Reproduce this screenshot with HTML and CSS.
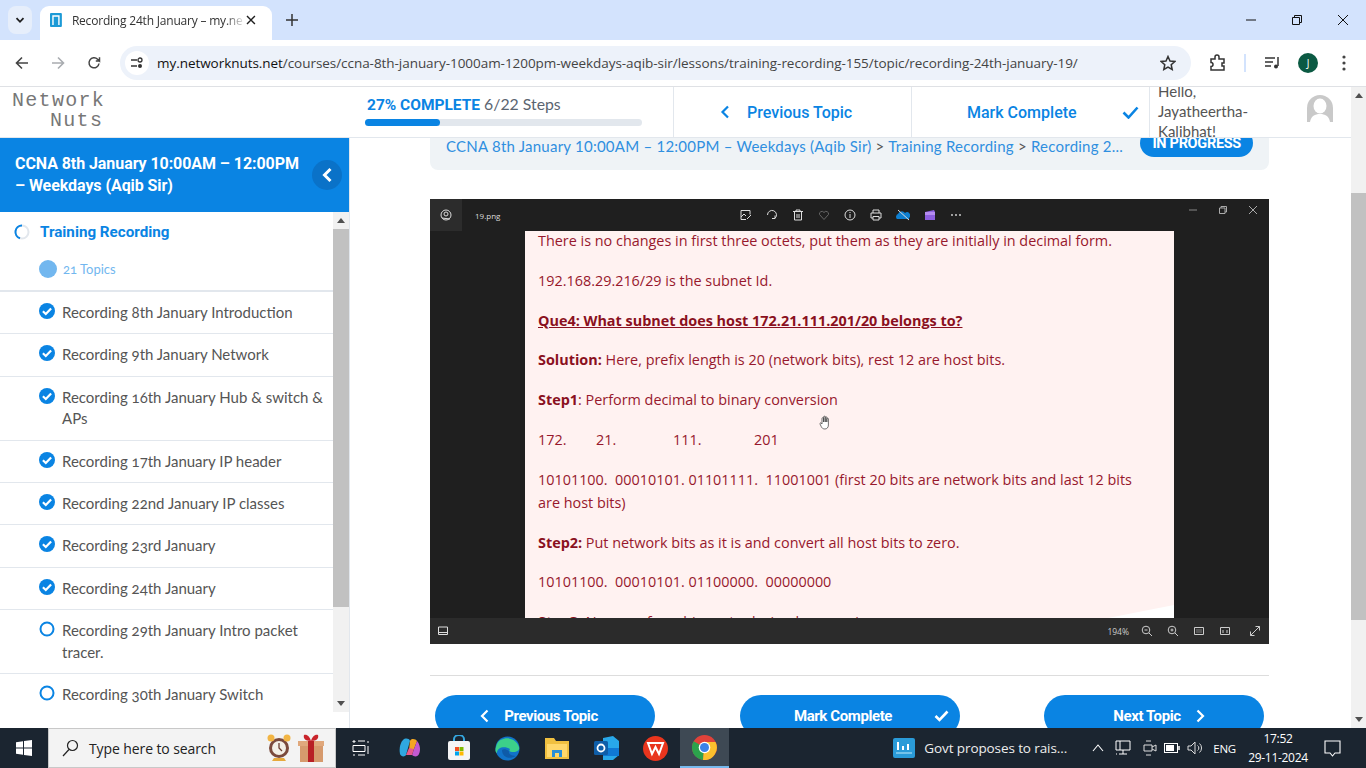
FILE: index.html
```html
<!DOCTYPE html>
<html lang="en">
<head>
    <meta charset="UTF-8">
    <meta name="viewport" content="width=device-width, initial-scale=1.0">
    <title>Recording 24th January – my.networknuts.net</title>
    <link rel="stylesheet" href="styles.css">
</head>
<body>
    <svg class="defs" width="0" height="0">
        <symbol id="done" viewBox="0 0 16 16">
            <circle cx="8" cy="8" r="8" fill="#0a84e3"/>
            <path d="M3.9 8.2l2.9 2.8 5.3-5.6" fill="none" stroke="#fff" stroke-width="2.2"/>
        </symbol>
        <symbol id="todo" viewBox="0 0 16 16">
            <circle cx="8" cy="8" r="6.5" fill="none" stroke="#0a84e3" stroke-width="2"/>
        </symbol>
    </svg>

    <!-- browser chrome -->
    <div class="tabstrip">
        <div class="tab-menu">
            <svg width="12" height="12" viewBox="0 0 12 12"><path d="M2.5 4.2L6 7.8l3.5-3.6" fill="none" stroke="#1f1f1f" stroke-width="1.8"/></svg>
        </div>
        <div class="tab">
            <svg class="favicon" width="12" height="14" viewBox="0 0 12 14"><rect width="12" height="14" rx="1" fill="#1c9ad6"/><path d="M3 12V3h6v9" fill="none" stroke="#fff" stroke-width="1.4"/></svg>
            <span class="tab-title">Recording 24th January – my.ne</span>
            <svg class="tab-close" width="10" height="10" viewBox="0 0 10 10"><path d="M1 1l8 8M9 1l-8 8" stroke="#1f1f1f" stroke-width="1.4"/></svg>
        </div>
        <svg class="new-tab" width="12" height="12" viewBox="0 0 12 12"><path d="M6 0v12M0 6h12" stroke="#333" stroke-width="1.5"/></svg>
        <div class="window-btns">
            <svg width="12" height="12" viewBox="0 0 12 12"><path d="M1 6h10" stroke="#111" stroke-width="1"/></svg>
            <svg width="12" height="12" viewBox="0 0 12 12"><path d="M1.5 3.5h7v7h-7zM3.5 3.5v-2h7v7h-2" fill="none" stroke="#111" stroke-width="1"/></svg>
            <svg width="12" height="12" viewBox="0 0 12 12"><path d="M1 1l10 10M11 1L1 11" stroke="#111" stroke-width="1"/></svg>
        </div>
    </div>

    <div class="toolbar">
        <svg class="nav-btn" width="14" height="14" viewBox="0 0 14 14"><path d="M13 7H1.5M7 1.5L1.5 7 7 12.5" fill="none" stroke="#444" stroke-width="1.6"/></svg>
        <svg class="nav-btn" width="14" height="14" viewBox="0 0 14 14"><path d="M1 7h11.5M7 1.5L12.5 7 7 12.5" fill="none" stroke="#a9acb0" stroke-width="1.6"/></svg>
        <svg class="nav-btn" width="14" height="14" viewBox="0 0 14 14"><path d="M12 7.5A5 5 0 1 1 10.6 3.3L12.5 5V1.2M12.5 5H8.8" fill="none" stroke="#444" stroke-width="1.5"/></svg>
        <div class="omnibox">
            <span class="site-info">
                <svg width="14" height="14" viewBox="0 0 14 14"><path d="M1 4h6M1 10h6" stroke="#333" stroke-width="1.4" fill="none"/><circle cx="10" cy="4" r="2" fill="none" stroke="#333" stroke-width="1.3"/><circle cx="10" cy="10" r="2" fill="#333"/></svg>
            </span>
            <span class="url"><b>my.networknuts.net</b>/courses/ccna-8th-january-1000am-1200pm-weekdays-aqib-sir/lessons/training-recording-155/topic/recording-24th-january-19/</span>
            <svg class="star" width="16" height="16" viewBox="0 0 16 16"><path d="M8 1.5l2 4.5 4.8.5-3.6 3.2 1 4.8L8 12.1l-4.2 2.4 1-4.8L1.2 6.5 6 6z" fill="none" stroke="#333" stroke-width="1.5"/></svg>
        </div>
        <svg class="tool-icon extensions" width="16" height="18" viewBox="0 0 16 18"><path d="M1 5h4V3a2 2 0 0 1 4 0v2h5v4h-2v3h2v4H1v-3.5a2 2 0 0 0 0-4z" fill="none" stroke="#333" stroke-width="1.5"/></svg>
        <span class="tool-sep"></span>
        <svg class="tool-icon media" width="16" height="14" viewBox="0 0 16 14"><path d="M1 2h10M1 6h8M1 10h6" stroke="#333" stroke-width="1.5"/><path d="M14 1v9" stroke="#333" stroke-width="1.5"/><circle cx="12" cy="10.5" r="2" fill="#333"/></svg>
        <span class="profile">J</span>
        <svg class="tool-icon kebab" width="4" height="16" viewBox="0 0 4 16"><circle cx="2" cy="2" r="1.6" fill="#444"/><circle cx="2" cy="8" r="1.6" fill="#444"/><circle cx="2" cy="14" r="1.6" fill="#444"/></svg>
    </div>

    <!-- the web page -->
    <div class="page">
        <div class="page-body">
            <header class="topbar">
                <div class="logo">
                    <span>Network</span>
                    <span class="logo-second">Nuts</span>
                </div>
                <div class="progress">
                    <div class="progress-label"><strong>27% COMPLETE</strong> 6/22 Steps</div>
                    <div class="progress-bar"><div class="progress-fill" style="width: 27%"></div></div>
                </div>
                <a class="top-link prev">
                    <svg width="10" height="14" viewBox="0 0 10 14"><path d="M8 1.5L2.5 7 8 12.5" fill="none" stroke="#0a84e3" stroke-width="2.2"/></svg>
                    Previous Topic
                </a>
                <a class="top-link mark">
                    Mark Complete
                    <svg width="17" height="13" viewBox="0 0 17 13"><path d="M1.5 6.5l5 5 9-10" fill="none" stroke="#0a84e3" stroke-width="2.6"/></svg>
                </a>
                <div class="user">
                    <div class="user-name">Hello, Jayatheertha-Kalibhat!</div>
                    <svg width="26" height="27" viewBox="0 0 26 27"><path d="M0 27V13a13 13 0 0 1 26 0v14z" fill="#c9c9c9"/><ellipse cx="13" cy="11" rx="6.5" ry="7.5" fill="#fff"/><path d="M3 27c1-6 5-8 10-8s9 2 10 8z" fill="#fff"/></svg>
                </div>
            </header>

            <div class="content">
                <aside class="sidebar">
                    <div class="course-title">
                        <span>CCNA 8th January 10:00AM – 12:00PM – Weekdays (Aqib Sir)</span>
                        <span class="collapse-btn">
                            <svg width="12" height="16" viewBox="0 0 12 16"><path d="M9.5 2L3.5 8l6 6" fill="none" stroke="#fff" stroke-width="3"/></svg>
                        </span>
                    </div>
                    <div class="outline">
                        <div class="lessons">
                            <div class="section-head">
                                <svg width="16" height="16" viewBox="0 0 16 16"><circle cx="8" cy="8" r="6.5" fill="none" stroke="#e2e7ed" stroke-width="2"/><path d="M8 1.5A6.5 6.5 0 0 0 6 14.2" fill="none" stroke="#0a84e3" stroke-width="2"/></svg>
                                <span>Training Recording</span>
                            </div>
                            <div class="topic-count"><i></i><span>21 Topics</span></div>
                            <div class="lesson"><svg><use href="#done"/></svg><span>Recording 8th January Introduction</span></div>
                            <div class="lesson"><svg><use href="#done"/></svg><span>Recording 9th January Network</span></div>
                            <div class="lesson"><svg><use href="#done"/></svg><span>Recording 16th January Hub &amp; switch &amp; APs</span></div>
                            <div class="lesson"><svg><use href="#done"/></svg><span>Recording 17th January IP header</span></div>
                            <div class="lesson"><svg><use href="#done"/></svg><span>Recording 22nd January IP classes</span></div>
                            <div class="lesson"><svg><use href="#done"/></svg><span>Recording 23rd January</span></div>
                            <div class="lesson"><svg><use href="#done"/></svg><span>Recording 24th January</span></div>
                            <div class="lesson"><svg><use href="#todo"/></svg><span>Recording 29th January Intro packet tracer.</span></div>
                            <div class="lesson"><svg><use href="#todo"/></svg><span>Recording 30th January Switch</span></div>
                        </div>
                        <div class="scroll small">
                            <i class="arrow-up"></i>
                            <div class="scroll-thumb"></div>
                            <i class="arrow-down"></i>
                        </div>
                    </div>
                </aside>

                <main class="main">
                    <div class="breadcrumb">
                        <div class="crumbs"><a>CCNA 8th January 10:00AM – 12:00PM – Weekdays (Aqib Sir)</a> &gt; <a>Training Recording</a> &gt; <a>Recording 2...</a></div>
                        <span class="status">IN PROGRESS</span>
                    </div>

                    <!-- recording frame: photo viewer window -->
                    <div class="viewer">
                        <div class="viewer-top">
                            <span class="viewer-home">
                                <svg width="12" height="12" viewBox="0 0 12 12"><circle cx="6" cy="6" r="5" fill="none" stroke="#ddd"/><circle cx="6" cy="5" r="2" fill="none" stroke="#ddd"/><path d="M2 9l8 1" stroke="#ddd"/></svg>
                            </span>
                            <span class="viewer-file">19.png</span>
                            <div class="viewer-tools">
                                <svg width="12" height="12" viewBox="0 0 12 12"><path d="M1 1.5h9v4M1 1.5v9h5M1 8l3-3 2 2M7 10l4-4" fill="none" stroke="#ddd"/></svg>
                                <svg width="12" height="12" viewBox="0 0 12 12"><path d="M1.5 6a4.5 4.5 0 1 1 7.5 3.3M9 6.5v3H6" fill="none" stroke="#ddd"/></svg>
                                <svg width="12" height="12" viewBox="0 0 12 12"><path d="M1 2.5h10M4 2.5V1h4v1.5M2.5 2.5V11h7V2.5M5 5v4M7 5v4" fill="none" stroke="#ddd"/></svg>
                                <svg width="12" height="12" viewBox="0 0 12 12"><path d="M6 10.5L1.5 5.5a2.5 2.5 0 0 1 4.5-2 2.5 2.5 0 0 1 4.5 2z" fill="none" stroke="#666"/></svg>
                                <svg width="12" height="12" viewBox="0 0 12 12"><circle cx="6" cy="6" r="5" fill="none" stroke="#ddd"/><path d="M6 5v4M6 3v1" stroke="#ddd"/></svg>
                                <svg width="12" height="12" viewBox="0 0 12 12"><path d="M3 4V1h6v3M3 9H1V4h10v5H9M3 7.5h6V11H3z" fill="none" stroke="#ddd"/></svg>
                                <svg width="14" height="12" viewBox="0 0 14 12"><path d="M1 10a3 3 0 0 1 1-5 4 4 0 0 1 7-1 3 3 0 0 1 4 5v1z" fill="#0e7fd0"/><path d="M2 1l11 10" stroke="#ddd"/></svg>
                                <svg width="12" height="12" viewBox="0 0 12 12"><path d="M1 3l9-2 1 2v8H1z" fill="#8d5fe0"/><path d="M1 3l10 0v3H1z" fill="#b48cf0"/></svg>
                                <svg width="12" height="12" viewBox="0 0 12 12"><circle cx="2" cy="6" r=".9" fill="#ddd"/><circle cx="6" cy="6" r=".9" fill="#ddd"/><circle cx="10" cy="6" r=".9" fill="#ddd"/></svg>
                            </div>
                            <div class="viewer-window">
                                <svg width="8" height="8" viewBox="0 0 8 8"><path d="M0 4h8" stroke="#888"/></svg>
                                <svg width="8" height="8" viewBox="0 0 8 8"><path d="M.5 2h5.5v5.5H.5zM2 2V.5h5.5V6H6" fill="none" stroke="#aaa"/></svg>
                                <svg width="8" height="8" viewBox="0 0 8 8"><path d="M0 0l8 8M8 0L0 8" stroke="#aaa"/></svg>
                            </div>
                        </div>
                        <div class="viewer-stage">
                            <div class="sheet">
                                <p>There is no changes in first three octets, put them as they are initially in decimal form.</p>
                                <p>192.168.29.216/29 is the subnet Id.</p>
                                <p><b><u>Que4: What subnet does host 172.21.111.201/20 belongs to?</u></b></p>
                                <p><b>Solution:</b> Here, prefix length is 20 (network bits), rest 12 are host bits.</p>
                                <p><b>Step1</b>: Perform decimal to binary conversion</p>
                                <p class="octets"><span>172.</span><span>21.</span><span>111.</span><span>201</span></p>
                                <p>10101100.&nbsp; 00010101. 01101111.&nbsp; 11001001 (first 20 bits are network bits and last 12 bits are host bits)</p>
                                <p><b>Step2:</b> Put network bits as it is and convert all host bits to zero.</p>
                                <p>10101100.&nbsp; 00010101. 01100000.&nbsp; 00000000</p>
                                <p><b>Step3:</b> Now, perform binary to decimal conversion</p>
                            </div>
                            <svg class="hand" width="12" height="15" viewBox="0 0 12 15"><path d="M3 9V3.5a.8.8 0 0 1 1.6 0V7V2a.8.8 0 0 1 1.6 0V7V2.5a.8.8 0 0 1 1.6 0V7V4a.8.8 0 0 1 1.6 0V10c0 2.5-1.5 4-3.5 4-2 0-3-1-3.7-2.5L1 9c-.4-1 .9-1.5 1.4-.7z" fill="#fff" stroke="#333" stroke-width=".7"/></svg>
                        </div>
                        <div class="viewer-bottom">
                            <svg width="12" height="12" viewBox="0 0 12 12"><path d="M1.5 2h9v7.5h-9zM1.5 7.500h9" fill="none" stroke="#ddd"/></svg>
                            <span class="zoom-level">194%</span>
                            <svg width="12" height="12" viewBox="0 0 12 12"><circle cx="5" cy="5" r="3.8" fill="none" stroke="#ccc"/><path d="M8 8l3 3M3.5 5h3" stroke="#ccc"/></svg>
                            <svg width="12" height="12" viewBox="0 0 12 12"><circle cx="5" cy="5" r="3.8" fill="none" stroke="#ccc"/><path d="M8 8l3 3M3.5 5h3M5 3.5v3" stroke="#ccc"/></svg>
                            <svg width="12" height="12" viewBox="0 0 12 12"><path d="M1.5 2.5h9v7h-9z" fill="none" stroke="#ccc"/><path d="M3 4h6v4H3z" fill="#555"/></svg>
                            <svg width="12" height="12" viewBox="0 0 12 12"><path d="M1.5 2.5h9v7h-9zM4 5v3M8 5v3" fill="none" stroke="#ccc"/></svg>
                            <svg class="fullscreen" width="12" height="12" viewBox="0 0 12 12"><path d="M1.5 10.5l9-9M6.5 1.5h4v4M1.5 6.5v4h4" fill="none" stroke="#ccc"/></svg>
                        </div>
                    </div>

                    <div class="pager">
                        <a class="pill pill-prev">
                            <svg width="9" height="14" viewBox="0 0 9 14"><path d="M7.5 1.5L2 7l5.5 5.5" fill="none" stroke="#fff" stroke-width="2.2"/></svg>
                            Previous Topic
                        </a>
                        <a class="pill pill-mark">
                            Mark Complete
                            <svg width="15" height="12" viewBox="0 0 15 12"><path d="M1.5 6l4 4 8-8.5" fill="none" stroke="#fff" stroke-width="2.6"/></svg>
                        </a>
                        <a class="pill pill-next">
                            Next Topic
                            <svg width="9" height="14" viewBox="0 0 9 14"><path d="M1.5 1.5L7 7l-5.5 5.5" fill="none" stroke="#fff" stroke-width="2.2"/></svg>
                        </a>
                    </div>
                </main>
            </div>
        </div>

        <div class="scroll">
            <i class="arrow-up"></i>
            <div class="scroll-thumb"></div>
            <i class="arrow-down"></i>
        </div>
    </div>

    <!-- windows taskbar -->
    <footer class="taskbar">
        <div class="start">
            <svg width="16" height="16" viewBox="0 0 16 16"><path d="M0 2.3l7-1v6.200H0zM8 1.100L16 0v7.500H8zM0 8.500h7v6.200l-7-1zM8 8.500h8V16l-8-1.100z" fill="#fff"/></svg>
        </div>
        <div class="search">
            <svg width="17" height="18" viewBox="0 0 17 18"><circle cx="10.5" cy="6.5" r="5" fill="none" stroke="#222" stroke-width="1.2"/><path d="M7 10.5L1 17" stroke="#222" stroke-width="1.2"/></svg>
            <span>Type here to search</span>
            <svg class="search-art" width="58" height="30" viewBox="0 0 58 30"><circle cx="13" cy="15" r="10" fill="#7b4a3c"/><circle cx="13" cy="15" r="7" fill="#f3efe6"/><path d="M13 10v5l3 3" stroke="#6a3c30" stroke-width="1.3" fill="none"/><circle cx="5" cy="5" r="3.5" fill="#f2b544"/><circle cx="21" cy="5" r="3.5" fill="#f2b544"/><path d="M6 28h14l-2-3H8z" fill="#e6a93c"/><path d="M34 11h23v18H34z" fill="#d69a6d"/><path d="M32 8h26v5H32z" fill="#e0a87c"/><path d="M42 8h6v21h-6z" fill="#b81f25"/><path d="M45 8c-6 0-8-3-7-6 3-1 6 2 7 6 1-4 4-7 7-6 1 3-1 6-7 6z" fill="#c9242b"/></svg>
        </div>
        <div class="task-icons">
            <span class="task-icon">
                <svg width="18" height="16" viewBox="0 0 18 16"><path d="M1 1h2v1H1zM6 1h7M1 5.5h12v6H1zM6 15h7M16 1v2M16 6v8M1 15h2" fill="none" stroke="#fff"/></svg>
            </span>
            <span class="task-icon">
                <svg width="24" height="24" viewBox="0 0 24 24"><path d="M5 4c2-2 6-2 7 1l-4 14c-1 2-5 2-6-1C1 13 2 7 5 4z" fill="#2fa8e0"/><path d="M12 5c1-3 6-2 7 0l-3 8-5 1z" fill="#f5a623"/><path d="M19 5c3 3 4 9 2 13-1 3-5 3-7 1l2-6z" fill="#c45ad0"/><path d="M8 19l3-7 5 1-2 6z" fill="#e85a8a"/></svg>
            </span>
            <span class="task-icon">
                <svg width="24" height="26" viewBox="0 0 24 26"><path d="M7 7V4a5 4 0 0 1 10 0v3" fill="none" stroke="#35a8e0" stroke-width="2"/><rect x="1" y="6" width="22" height="19" rx="2" fill="#f5f5f5"/><path d="M8 12h4v4H8z" fill="#f25022"/><path d="M12.5 12h4v4h-4z" fill="#7fba00"/><path d="M8 16.5h4v4H8z" fill="#00a4ef"/><path d="M12.5 16.5h4v4h-4z" fill="#ffb900"/></svg>
            </span>
            <span class="task-icon">
                <svg width="25" height="25" viewBox="0 0 25 25"><circle cx="12.5" cy="12.5" r="12" fill="#1173c9"/><path d="M2 8c3-7 18-9 22 3 1 4-3 5-7 5-3 0-3-2-2-3-5-3-13-2-13 4-3-2-1-6 0-9z" fill="#3cd08a"/><path d="M7 14c0 7 7 10 14 6-5 0-8-2-7-5-3-2-6-2-7-1z" fill="#0e5ba8"/></svg>
            </span>
            <span class="task-icon">
                <svg width="24" height="21" viewBox="0 0 24 21"><path d="M0 0h9l2 3h13v18H0z" fill="#f0c040"/><path d="M2 6h20v13H2z" fill="#ffd86b"/><path d="M7 12h10v7H7z" fill="#2a8fd6"/><path d="M10 15h4v4h-4z" fill="#ffd86b"/></svg>
            </span>
            <span class="task-icon">
                <svg width="26" height="24" viewBox="0 0 26 24"><path d="M10 2l10-2 6 5v14l-6 5H10z" fill="#28a8ea"/><path d="M10 12h16v8H10z" fill="#0f78d4"/><rect x="1" y="5" width="14" height="14" rx="1.5" fill="#0f5ea8"/><circle cx="8" cy="12" r="3.5" fill="none" stroke="#fff" stroke-width="1.8"/></svg>
            </span>
            <span class="task-icon">
                <svg width="25" height="25" viewBox="0 0 25 25"><circle cx="12.5" cy="12.5" r="12.5" fill="#e9351d"/><path d="M5 7h15l-4 11-3.5-7-3.5 7z" fill="none" stroke="#fff" stroke-width="2"/></svg>
            </span>
            <span class="task-icon active">
                <svg width="25" height="25" viewBox="0 0 25 25"><circle cx="12.5" cy="12.5" r="12.5" fill="#e0423a"/><path d="M12.5 12.5L1.7 6.2A12.5 12.5 0 0 0 11 25z" fill="#2ca24c"/><path d="M12.5 7h11A12.5 12.5 0 0 1 11 25z" fill="#fbc02d"/><circle cx="12.5" cy="12.5" r="5.8" fill="#fff"/><circle cx="12.5" cy="12.5" r="4.5" fill="#3b82e8"/></svg>
            </span>
        </div>
        <div class="news">
            <svg width="22" height="20" viewBox="0 0 22 20"><rect width="22" height="20" rx="2" fill="#2a9bd8"/><path d="M5 4v8M10 8v4M15 6v6" stroke="#fff" stroke-width="2"/><path d="M3 15h16" stroke="#8fd0ef" stroke-width="1.5"/></svg>
            <span>Govt proposes to rais...</span>
        </div>
        <div class="tray">
            <svg class="tray-up" width="12" height="8" viewBox="0 0 12 8"><path d="M1 7l5-6 5 6" fill="none" stroke="#fff" stroke-width="1.1"/></svg>
            <svg class="tray-net" width="16" height="16" viewBox="0 0 16 16"><path d="M1 1h14v9H1zM5 1v9M8 10v4M4 14h8M1 14h1" fill="none" stroke="#fff"/></svg>
            <svg class="tray-cam" width="14" height="16" viewBox="0 0 14 16"><path d="M3 1h5M3 15h5M1 5h8v6H1zM9 7l4-2v6l-4-2" fill="none" stroke="#ddd"/></svg>
            <svg width="16" height="10" viewBox="0 0 16 10"><rect x=".5" y=".5" width="13" height="9" fill="none" stroke="#fff"/><rect x="2" y="2" width="8" height="6" fill="#fff"/><path d="M15 3v4" stroke="#fff" stroke-width="1.5"/></svg>
            <svg width="16" height="14" viewBox="0 0 16 14"><path d="M1 5h3l4-4v12L4 9H1zM10.5 4.5a3 3 0 0 1 0 5M12.5 2.5a6 6 0 0 1 0 9" fill="none" stroke="#ddd"/></svg>
            <span class="lang">ENG</span>
            <div class="clock"><span>17:52</span><span>29-11-2024</span></div>
            <svg class="notify" width="17" height="17" viewBox="0 0 17 17"><path d="M1 1h15v12h-5l-2.5 3L6 13H1z" fill="none" stroke="#fff" stroke-width="1.1"/></svg>
        </div>
    </footer>
</body>
</html>
```

FILE: styles.css
```css
* {
    box-sizing: border-box;
}

html, body {
    margin: 0;
    height: 768px;
    overflow: hidden;
}

body {
    display: flex;
    flex-direction: column;
    font-family: "Lato", "Liberation Sans", sans-serif;
    background: #fff;
    color: #444;
}

.defs {
    display: none;
}

/* browser chrome */
.tabstrip {
    height: 40px;
    flex: none;
    display: flex;
    align-items: flex-end;
    background: #d3e3fd;
}

.tab-menu {
    width: 24px;
    height: 28px;
    margin: 0 8px 6px 8px;
    display: flex;
    align-items: center;
    justify-content: center;
    border-radius: 8px;
    background: #e6eefb;
}

.tab {
    width: 232px;
    height: 34px;
    display: flex;
    align-items: center;
    padding: 0 11px 6px 10px;
    background: #fff;
    border-radius: 9px 9px 0 0;
}

.tab-title {
    width: 176px;
    margin-left: 10px;
    overflow: hidden;
    white-space: nowrap;
    font-family: "Open Sans", sans-serif;
    font-size: 12px;
    letter-spacing: -0.2px;
    color: #333;
    -webkit-mask-image: linear-gradient(to right, #000 88%, transparent);
}

.tab-close {
    margin-left: auto;
    margin-right: 5px;
}

.new-tab {
    margin: 0 0 14px 14px;
}

.window-btns {
    margin-left: auto;
    display: flex;
    gap: 34px;
    padding-right: 17px;
    margin-bottom: 14px;
}

.toolbar {
    height: 47px;
    flex: none;
    display: flex;
    align-items: center;
    padding: 0 18px 1px 15px;
    background: #fff;
    border-bottom: 1px solid #dfe1e5;
}

.nav-btn {
    margin-right: 22px;
}

.omnibox {
    width: 1071px;
    height: 34px;
    margin-left: -3px;
    display: flex;
    align-items: center;
    padding: 0 15px 0 5px;
    background: #edf2fa;
    border-radius: 17px;
}

.site-info {
    width: 24px;
    height: 24px;
    display: flex;
    align-items: center;
    justify-content: center;
    background: #fff;
    border-radius: 50%;
}

.url {
    margin-left: 8px;
    white-space: nowrap;
    font-family: "Open Sans", sans-serif;
    font-size: 13.5px;
    letter-spacing: -0.05px;
    color: #444;
}

.url b {
    font-weight: 400;
    color: #111;
}

.star {
    margin-left: auto;
}

.tool-icon {
    flex: none;
}

.extensions {
    margin-left: 19px;
}

.tool-sep {
    width: 2px;
    height: 18px;
    margin: 0 18px;
    background: #d3e3fd;
}

.profile {
    width: 20px;
    height: 20px;
    margin-left: 18px;
    display: flex;
    align-items: center;
    justify-content: center;
    background: #0b5a43;
    border-radius: 50%;
    font-family: "Open Sans", sans-serif;
    font-size: 10px;
    color: #fff;
}

.kebab {
    margin-left: 24px;
}

/* page frame */
.page {
    height: 641px;
    flex: none;
    display: flex;
}

.page-body {
    flex: 1;
    min-width: 0;
    display: flex;
    flex-direction: column;
}

.scroll {
    width: 15px;
    flex: none;
    display: flex;
    flex-direction: column;
    align-items: center;
    background: #f1f1f1;
}

.scroll-thumb {
    width: 100%;
    height: 427px;
    margin-top: 95px;
    background: #c1c1c1;
}

.arrow-up, .arrow-down {
    width: 0;
    height: 0;
    border-left: 4px solid transparent;
    border-right: 4px solid transparent;
}

.arrow-up {
    margin-top: 6px;
    border-bottom: 5px solid #505050;
}

.arrow-down {
    margin-top: auto;
    margin-bottom: 6px;
    border-top: 5px solid #505050;
}

/* top bar */
.topbar {
    height: 51px;
    flex: none;
    display: flex;
    background: #fff;
    border-bottom: 1px solid #e2e7ed;
}

.logo {
    width: 350px;
    flex: none;
    padding: 4px 0 0 12px;
    display: flex;
    flex-direction: column;
    font-family: "Liberation Mono", monospace;
    font-size: 20px;
    line-height: 20px;
    letter-spacing: 1.3px;
    color: #777;
}

.logo-second {
    margin-left: 38px;
}

.progress {
    width: 323px;
    flex: none;
    padding: 7px 0 0 15px;
}

.progress-label {
    margin-left: 2px;
    font-size: 15.8px;
    line-height: 20px;
    color: #5a6470;
}

.progress-label strong {
    font-family: "Roboto", sans-serif;
    font-size: 15.5px;
    font-weight: 700;
    color: #0a84e3;
}

.progress-bar {
    width: 277px;
    height: 7px;
    margin-top: 4px;
    background: #e2e7ed;
    border-radius: 4px;
}

.progress-fill {
    height: 100%;
    background: #0a84e3;
    border-radius: 4px;
}

.top-link {
    width: 238px;
    flex: none;
    display: flex;
    align-items: center;
    border-left: 1px solid #e2e7ed;
    font-family: "Roboto", sans-serif;
    font-size: 16px;
    font-weight: 500;
    color: #0a84e3;
}

.prev {
    padding-left: 46px;
    gap: 17px;
}

.mark {
    padding-left: 55px;
    gap: 45px;
}

.user {
    flex: 1;
    display: flex;
    justify-content: space-between;
    padding: 0 18px 0 8px;
    overflow: hidden;
    border-left: 1px solid #e2e7ed;
    height: 50px;
}

.user-name {
    width: 110px;
    margin-top: -6px;
    font-size: 15px;
    line-height: 20px;
    color: #555;
}

.user svg {
    margin-top: 8px;
}

/* content */
.content {
    flex: 1;
    min-height: 0;
    display: flex;
}

.sidebar {
    width: 350px;
    flex: none;
    border-right: 1px solid #e2e7ed;
}

.course-title {
    height: 74px;
    display: flex;
    align-items: center;
    gap: 6px;
    padding: 0 7px 0 15px;
    background: #0a84e3;
    font-family: "Roboto", sans-serif;
    font-size: 16px;
    font-weight: 700;
    line-height: 22px;
    letter-spacing: -.07px;
    color: #fff;
}

.collapse-btn {
    width: 30px;
    height: 30px;
    flex: none;
    display: flex;
    align-items: center;
    justify-content: center;
    background: #0a72c8;
    border-radius: 50%;
}

.outline {
    height: 500px;
    display: flex;
}

.lessons {
    flex: 1;
    min-width: 0;
    overflow: hidden;
}

.scroll.small {
    width: 16px;
}

.small .scroll-thumb {
    height: 378px;
    margin-top: 6px;
}

.section-head {
    height: 39px;
    padding-left: 14px;
    display: flex;
    align-items: center;
    gap: 10px;
    font-family: "Roboto", sans-serif;
    font-size: 15.2px;
    font-weight: 700;
    color: #0a84e3;
}

.topic-count {
    height: 41px;
    padding: 0 0 3px 39px;
    display: flex;
    align-items: center;
    gap: 6px;
    border-bottom: 2px solid #e2e7ed;
    font-size: 13px;
    font-variant-numeric: oldstyle-nums;
    color: #72b7ef;
}

.topic-count i {
    width: 18px;
    height: 18px;
    background: #72b7ef;
    border-radius: 50%;
}

.lesson {
    display: flex;
    gap: 7px;
    padding: 10px 6px 10px 39px;
    border-bottom: 1px solid #e2e7ed;
    font-size: 15px;
    font-variant-numeric: oldstyle-nums;
    line-height: 21.4px;
    color: #555;
}

.lesson svg {
    width: 16px;
    height: 16px;
    flex: none;
    margin-top: 1px;
}

.main {
    flex: 1;
    min-width: 0;
    overflow: hidden;
    padding: 0 82px 0 80px;
}

.breadcrumb {
    height: 32px;
    display: flex;
    justify-content: space-between;
    padding: 0 16px;
    background: #eff3f6;
    border-radius: 0 0 8px 8px;
}

.crumbs {
    margin-top: -1px;
    white-space: nowrap;
    font-size: 15px;
    letter-spacing: .24px;
    line-height: 18px;
    color: #555;
}

.crumbs a {
    color: #2f8fe0;
}

.status {
    height: 28px;
    margin-top: -9px;
    padding: 0 12px;
    line-height: 29px;
    background: #0a84e3;
    border-radius: 14px;
    font-family: "Roboto", sans-serif;
    font-size: 14.5px;
    font-weight: 700;
    letter-spacing: -.3px;
    color: #fff;
}

/* screenshot of the photo viewer */
.viewer {
    height: 445px;
    margin-top: 29px;
    display: flex;
    flex-direction: column;
    background: #1f1f1f;
}

.viewer-top {
    height: 32px;
    flex: none;
    display: flex;
    align-items: center;
    color: #ddd;
}

.viewer-home {
    width: 32px;
    height: 100%;
    display: flex;
    align-items: center;
    justify-content: center;
    background: #2c2c2c;
}

.viewer-file {
    width: 265px;
    margin-left: 13px;
    font-family: "Open Sans", sans-serif;
    font-size: 8px;
}

.viewer-tools {
    display: flex;
    gap: 14px;
}

.viewer-window {
    margin-left: auto;
    display: flex;
    gap: 22px;
    padding-right: 12px;
    margin-bottom: 11px;
}

.viewer-stage {
    position: relative;
    flex: 1;
    min-height: 0;
    padding: 0 95px;
    overflow: hidden;
}

.sheet {
    position: relative;
    height: 100%;
    overflow: hidden;
    padding: 0 25px 0 13px;
    background: #fff2f1;
    font-family: "Open Sans", sans-serif;
    font-size: 14.4px;
    line-height: 23px;
    color: #97182d;
}

.sheet::after {
    content: "";
    position: absolute;
    right: 0;
    bottom: 0;
    width: 66px;
    height: 13px;
    background: #fff;
    clip-path: polygon(100% 0, 100% 100%, 0 100%);
}

.sheet p {
    margin: 0 0 16.8px;
}

.sheet p:first-child {
    margin-top: -2px;
}

.sheet b {
    color: #8a1020;
}

.octets {
    display: flex;
}

.octets span:nth-child(1) {
    width: 58px;
}

.octets span:nth-child(2) {
    width: 77px;
}

.octets span:nth-child(3) {
    width: 81px;
}

.hand {
    position: absolute;
    left: 389px;
    top: 184px;
}

.viewer-bottom {
    height: 26px;
    flex: none;
    display: flex;
    align-items: center;
    gap: 14px;
    padding: 0 8px 0 7px;
    background: #2b2b2b;
}

.zoom-level {
    margin-left: auto;
    margin-right: -2px;
    font-family: "Open Sans", sans-serif;
    font-size: 8.5px;
    color: #ccc;
}

.fullscreen {
    margin-left: 4px;
}

.pager {
    margin-top: 31px;
    padding: 19px 5px 0;
    display: flex;
    justify-content: space-between;
    border-top: 1px solid #ddd;
}

.pill {
    width: 220px;
    height: 42px;
    display: flex;
    align-items: center;
    justify-content: center;
    gap: 15px;
    background: #0a84e3;
    border-radius: 21px;
    font-family: "Roboto", sans-serif;
    font-size: 15px;
    font-weight: 700;
    letter-spacing: -.4px;
    color: #fff;
}

.pill-prev {
    padding-right: 12px;
}

.pill-mark {
    gap: 42px;
    padding-left: 44px;
}

.pill-next {
    padding-left: 10px;
}

/* taskbar */
.taskbar {
    height: 40px;
    flex: none;
    display: flex;
    align-items: center;
    background: #1b2530;
    color: #fff;
}

.start {
    width: 48px;
    height: 100%;
    display: flex;
    align-items: center;
    justify-content: center;
}

.search {
    width: 288px;
    height: 100%;
    display: flex;
    align-items: center;
    gap: 10px;
    padding: 0 11px 0 13px;
    background: #f3f3f3;
    border: 1px solid #c8c8c8;
    font-family: "Open Sans", sans-serif;
    font-size: 14px;
    letter-spacing: -.1px;
    color: #222;
}

.search-art {
    margin-left: auto;
}

.task-icons {
    display: flex;
    height: 100%;
}

.task-icon {
    width: 49.2px;
    height: 100%;
    display: flex;
    align-items: center;
    justify-content: center;
}

.task-icon.active {
    background: #3e4954;
    border-bottom: 2px solid #76b9ed;
}

.task-icons .task-icon:first-child {
    width: 49px;
}

.news {
    margin-left: 164px;
    display: flex;
    align-items: center;
    gap: 9px;
    font-family: "Open Sans", sans-serif;
    font-size: 13.5px;
    letter-spacing: -.1px;
    color: #eee;
}

.tray {
    margin-left: auto;
    display: flex;
    align-items: center;
    gap: 7px;
    padding-right: 25px;
}

.tray-net {
    margin-left: 4px;
}

.tray-cam {
    margin-left: 5px;
}

.lang {
    margin-left: 3px;
    font-family: "Open Sans", sans-serif;
    font-size: 11.5px;
    letter-spacing: -.2px;
}

.clock {
    width: 70px;
    display: flex;
    flex-direction: column;
    align-items: center;
    gap: 3px;
    font-family: "Open Sans", sans-serif;
    font-size: 12px;
    letter-spacing: -.3px;
    line-height: 16px;
}

.notify {
    margin-left: 4px;
}
```
